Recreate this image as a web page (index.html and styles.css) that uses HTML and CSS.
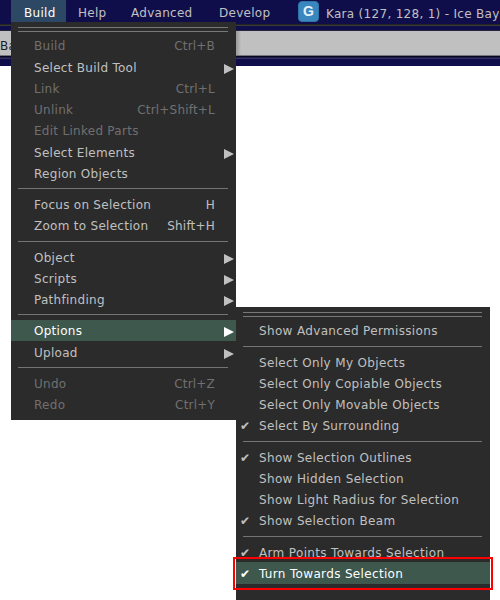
FILE: index.html
```html
<!DOCTYPE html>
<html lang="en">
<head>
<meta charset="utf-8">
<title>Build menu</title>
<link rel="stylesheet" href="styles.css">
</head>
<body>
<header class="top">
  <nav class="menubar">
    <span class="tab tab-build active">Build</span>
    <span class="tab tab-help">Help</span>
    <span class="tab tab-adv">Advanced</span>
    <span class="tab tab-dev">Develop</span>
    <span class="rating">G</span>
    <span class="location">Kara (127, 128, 1) - Ice Bay</span>
  </nav>
  <div class="edge"></div>
  <div class="address">Ba</div>
  <div class="foot"></div>
</header>

<div class="menu main">
  <div class="tear"></div>
  <div class="item off"><span>Build</span><kbd>Ctrl+B</kbd></div>
  <div class="item sub gap"><span>Select Build Tool</span></div>
  <div class="item off"><span>Link</span><kbd>Ctrl+L</kbd></div>
  <div class="item off"><span>Unlink</span><kbd>Ctrl+Shift+L</kbd></div>
  <div class="item off"><span>Edit Linked Parts</span></div>
  <div class="item sub gap"><span>Select Elements</span></div>
  <div class="item"><span>Region Objects</span></div>
  <div class="sep"></div>
  <div class="item"><span>Focus on Selection</span><kbd>H</kbd></div>
  <div class="item"><span>Zoom to Selection</span><kbd>Shift+H</kbd></div>
  <div class="sep tall"></div>
  <div class="item sub"><span>Object</span></div>
  <div class="item sub"><span>Scripts</span></div>
  <div class="item sub"><span>Pathfinding</span></div>
  <div class="sep"></div>
  <div class="item sub hot"><span>Options</span></div>
  <div class="item sub gap"><span>Upload</span></div>
  <div class="sep"></div>
  <div class="item off"><span>Undo</span><kbd>Ctrl+Z</kbd></div>
  <div class="item off"><span>Redo</span><kbd>Ctrl+Y</kbd></div>
</div>

<div class="menu options">
  <div class="tear"></div>
  <div class="item"><span>Show Advanced Permissions</span></div>
  <div class="sep tall"></div>
  <div class="item"><span>Select Only My Objects</span></div>
  <div class="item"><span>Select Only Copiable Objects</span></div>
  <div class="item"><span>Select Only Movable Objects</span></div>
  <div class="item"><i>✔</i><span>Select By Surrounding</span></div>
  <div class="sep tall"></div>
  <div class="item"><i>✔</i><span>Show Selection Outlines</span></div>
  <div class="item"><span>Show Hidden Selection</span></div>
  <div class="item"><span>Show Light Radius for Selection</span></div>
  <div class="item"><i>✔</i><span>Show Selection Beam</span></div>
  <div class="sep tall"></div>
  <div class="item"><i>✔</i><span>Arm Points Towards Selection</span></div>
  <div class="item hot last"><i>✔</i><span>Turn Towards Selection</span></div>
</div>
<div class="marker"></div>
</body>
</html>
```
FILE: styles.css
```css
* { box-sizing: border-box; }
body {
  margin: 0;
  width: 500px;
  height: 600px;
  position: relative;
  overflow: hidden;
  background: #fff;
  color: #c0c0c0;
  font: 12px/23px "DejaVu Sans", sans-serif;
  letter-spacing: 0.28px;
  white-space: nowrap;
}
.top { height: 66px; background: #100e4a; }
.menubar { display: flex; height: 24px; padding-left: 11px; }
.tab { height: 22px; padding-top: 2px; }
.tab-build { width: 55px; padding-left: 13px; }
.tab-help { width: 65px; padding-left: 12px; }
.tab-adv { width: 88px; }
.tab-dev { width: 79px; }
.active { background: #2c4864; color: #fff; }
.rating {
  width: 21px; height: 21px; margin-top: 1px;
  border-radius: 4px;
  background: #3a87bf;
  border: 1px solid #2f74a6;
  color: #e6f2fa;
  font: bold 14px/19px "Liberation Sans", sans-serif;
  letter-spacing: 0;
  text-align: center;
}
.tab, .rating { flex: none; }
.location { margin-left: 7px; padding-top: 3px; letter-spacing: 0.3px; }
.edge { height: 2px; background: linear-gradient(#23231f 50%, #3a3a3c 50%); }
.address {
  height: 26px;
  margin-top: 4px;
  border-top: 1px solid #28263e;
  border-bottom: 1px solid #77747c;
  background: linear-gradient(90deg, #c0c0c0 235px, #989898 236px, #c0c0c0 241px);
  color: #202020;
  line-height: 30px;
}
.foot { height: 3px; background: linear-gradient(#090720 33%, #1b184a 33% 66%, #34315e 66%); }

.menu { position: absolute; background: #2b2b2b; }
.menu::before { content: ""; display: table; }
.main { left: 11px; top: 22px; width: 225px; height: 398px; }
.options { left: 236px; top: 307px; width: 254px; height: 293px; letter-spacing: 0.34px; }
.tear {
  height: 5px;
  margin: 5px 8px 3px 7px;
  border-top: 1px solid #787878;
  border-bottom: 1px solid #787878;
}
.item {
  display: flex;
  position: relative;
  height: 21px;
  padding: 0 21px 0 23px;
}
.item kbd { margin-left: auto; font: inherit; letter-spacing: 0.2px; }
.item i { position: absolute; left: 4px; font-style: normal; }
.off { color: #707070; }
.hot { background: #3e584e; color: #fff; }
.gap { margin-top: 1px; }
.sub::after {
  content: "";
  position: absolute;
  right: 2px;
  top: 7px;
  border: solid transparent;
  border-width: 5px 0 5px 10px;
  border-left-color: currentColor;
}
.sep {
  height: 10px;
  padding: 4px 8px 0 7px;
}
.sep::before { content: ""; display: block; height: 1px; background: #747474; }
.tall { height: 11px; padding-top: 5px; }
.last { height: 22px; margin-top: -1px; padding-top: 1px; }
.marker {
  position: absolute;
  left: 233px; top: 557px;
  width: 260px; height: 33px;
  border: 2px solid #f00;
}
```
